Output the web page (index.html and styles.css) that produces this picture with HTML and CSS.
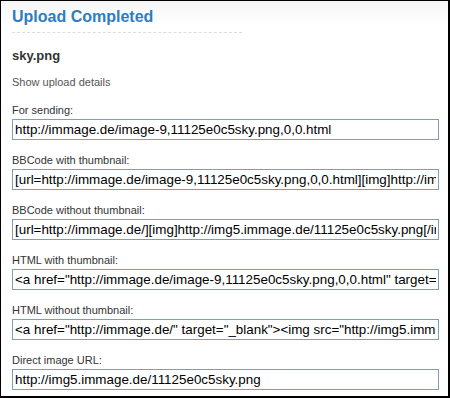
FILE: index.html
```html
<!DOCTYPE html>
<html lang="en">
<head>
  <meta charset="UTF-8">
  <meta name="viewport" content="width=device-width, initial-scale=1.0">
  <title>Upload Completed</title>
  <link rel="stylesheet" href="styles.css">
</head>
<body>
  <div class="frame">
    <h1 class="title">Upload Completed</h1>
    <h2 class="filename">sky.png</h2>
    <p class="details">Show upload details</p>

    <div class="links">
      <div class="field">
        <label for="sending">For sending:</label>
        <input type="text" id="sending" readonly value="http://immage.de/image-9,11125e0c5sky.png,0,0.html">
      </div>
      <div class="field">
        <label for="bbThumb">BBCode with thumbnail:</label>
        <input type="text" id="bbThumb" readonly value="[url=http://immage.de/image-9,11125e0c5sky.png,0,0.html][img]http://img5.immage.de/thumb/11125e0c5sky.png[/img][/url]">
      </div>
      <div class="field">
        <label for="bbPlain">BBCode without thumbnail:</label>
        <input type="text" id="bbPlain" readonly value="[url=http://immage.de/][img]http://img5.immage.de/11125e0c5sky.png[/img][/url]">
      </div>
      <div class="field">
        <label for="htmlThumb">HTML with thumbnail:</label>
        <input type="text" id="htmlThumb" readonly value='&lt;a href="http://immage.de/image-9,11125e0c5sky.png,0,0.html" target="_blank"&gt;&lt;img src="http://img5.immage.de/thumb/11125e0c5sky.png" /&gt;&lt;/a&gt;'>
      </div>
      <div class="field">
        <label for="htmlPlain">HTML without thumbnail:</label>
        <input type="text" id="htmlPlain" readonly value='&lt;a href="http://immage.de/" target="_blank"&gt;&lt;img src="http://img5.immage.de/11125e0c5sky.png" /&gt;&lt;/a&gt;'>
      </div>
      <div class="field">
        <label for="direct">Direct image URL:</label>
        <input type="text" id="direct" readonly value="http://img5.immage.de/11125e0c5sky.png">
      </div>
    </div>
  </div>
</body>
</html>
```

FILE: styles.css
```css
body {
  margin: 0;
  font-family: "Liberation Sans", Arial, sans-serif;
}
.frame {
  width: 450px;
  height: 398px;
  box-sizing: border-box;
  border-top: 1px solid #000;
  border-left: 1px solid #000;
  border-right: 2px solid #000;
  border-bottom: 2px solid #000;
  padding: 6px 8px 0 11px;
  background: linear-gradient(#f6f6f6, #fff 24px);
  overflow: hidden;
}
.title {
  width: 230px;
  margin: 0;
  padding-bottom: 6px;
  border-bottom: 1px dashed #dcdcdc;
  font-size: 16px;
  line-height: 19px;
  color: #2f7dc0;
}
.filename {
  margin: 15px 0 0;
  font-size: 13px;
  line-height: 16px;
  color: #333;
}
.details {
  margin: 11px 0 0;
  font-size: 11px;
  line-height: 14px;
  color: #555;
}
.links {
  display: flex;
  flex-direction: column;
  gap: 13px;
  margin-top: 14px;
}
.field {
  display: flex;
  flex-direction: column;
  gap: 2px;
}
.field label {
  font-size: 11px;
  line-height: 14px;
  color: #333;
}
.field input {
  width: 427px;
  height: 21px;
  box-sizing: border-box;
  margin: 0;
  padding: 0 2px;
  border: 1px solid #7f9db9;
  background: #fff;
  font-family: "Liberation Sans", Arial, sans-serif;
  font-size: 13.4px;
  color: #000;
  outline: none;
}
```
